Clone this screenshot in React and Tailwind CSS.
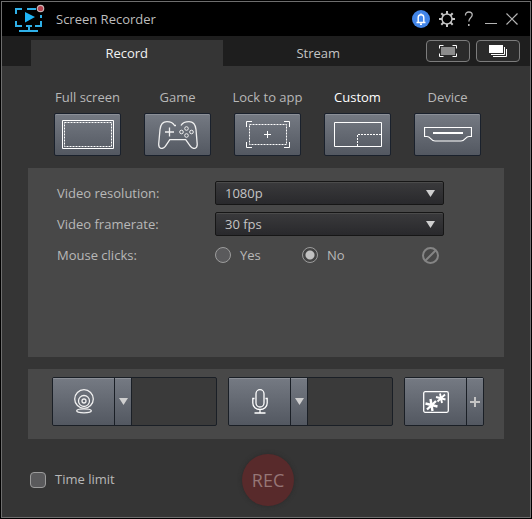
import { useState } from "react";

const steel =
  "bg-linear-to-b from-[#757a83] to-[#535861] inset-shadow-[0_1px_0_#8b8f97] hover:brightness-110";

const ScreenRecorderLogo = () => (
  <svg width="32" height="30" viewBox="0 1 32 30" fill="none" aria-hidden="true">
    <g stroke="#2fb0e8" strokeWidth="2">
      <path d="M2 11V6h6M13 6h9M2 18v5h6M27 12v3M27 18v5h-6" />
      <path d="M15 23v5M5 28h19" />
      <path d="M12 23h6" />
    </g>
    <path d="M11 9l10 5-10 5.500z" fill="#1fb4f5" />
    <circle cx="26.500" cy="5.500" r="3.200" fill="#b3404c" stroke="#c9b5b5" strokeWidth="1.200" />
  </svg>
);

const BellIcon = () => (
  <svg width="18" height="18" viewBox="0 0 18 18" fill="none" aria-hidden="true">
    <circle cx="9" cy="9" r="9" fill="#4285e8" />
    <path
      d="M4.500 12.500h9M6.200 12V7.500a2.800 2.800 0 0 1 5.600 0V12M8 14.200h2M9 3.500v1"
      stroke="#fff"
      strokeWidth="1.400"
    />
  </svg>
);

const GearIcon = () => (
  <svg width="16" height="16" viewBox="0 0 16 16" fill="none" stroke="#c4c4c4" aria-hidden="true">
    <circle cx="8" cy="8" r="5" strokeWidth="1.500" />
    <path
      d="M8 0v3M8 13v3M0 8h3M13 8h3M2.300 2.300l2.200 2.200M11.500 11.500l2.200 2.200M2.300 13.700l2.200-2.200M11.500 4.500l2.200-2.200"
      strokeWidth="2"
    />
  </svg>
);

const HelpIcon = () => (
  <svg width="10" height="16" viewBox="0 0 10 16" fill="none" stroke="#b4b4b4" aria-hidden="true">
    <path d="M1.500 4.500V4c0-2 1.400-3 3.300-3s3.400 1 3.400 3c0 2.700-3.400 3-3.400 6.500" strokeWidth="1.300" />
    <path d="M4.800 13v2" strokeWidth="1.600" />
  </svg>
);

const MinimizeIcon = () => (
  <svg width="12" height="12" viewBox="0 0 12 12" aria-hidden="true">
    <path d="M0 10.500h12" stroke="#b4b4b4" />
  </svg>
);

const CloseIcon = () => (
  <svg width="12" height="12" viewBox="0 0 12 12" aria-hidden="true">
    <path d="M.5.5l11 11M11.500.5l-11 11" stroke="#b4b4b4" strokeWidth="1.200" />
  </svg>
);

const RegionIcon = () => (
  <svg width="18" height="12" viewBox="0 0 18 12" fill="none" aria-hidden="true">
    <path d="M2 2h14v8H2z" fill="#8c8c8c" />
    <path d="M.5 3.500v-3h4M13.500.5h4v3M17.500 8.500v3h-4M4.500 11.500h-4v-3" stroke="#fff" />
  </svg>
);

const StackIcon = () => (
  <svg width="18" height="12" viewBox="0 0 18 12" fill="none" aria-hidden="true">
    <path d="M0 0h14v8H0z" fill="#fff" />
    <path d="M15.500 2v7.500H2M17.500 4v7.500H4" stroke="#fff" />
  </svg>
);

const FullScreenIcon = () => (
  <svg width="52" height="29" viewBox="0 0 52 29" fill="none" stroke="#fff" aria-hidden="true">
    <path d="M.5.5h51v28H.5z" />
    <path d="M2.500 2.500h47v24h-47z" strokeDasharray="2 1" />
  </svg>
);

const GameIcon = () => (
  <svg width="40" height="28" viewBox="0 0 40 28" fill="none" stroke="#f0f0f0" aria-hidden="true">
    <path d="M18 4.500h-1.500C15 2 12.500.7 9 .7 4.500.7 2.600 3.500 2 8.500L.7 23c-.3 5 4.200 5.600 6.600 2.300l4.500-6.600h15.900l4.800 6.600c2.500 3.300 7 2.700 6.700-2.300L38 8.500C37.400 3.500 35.500.7 31 .7c-3.500 0-6.500 1.300-8 3.800" strokeWidth="1.300" />
    <path d="M11.500 6.500v9M7 11h9" strokeWidth="1.300" />
    <circle cx="28.500" cy="7.500" r="1.800" />
    <circle cx="23.500" cy="11" r="1.800" />
    <circle cx="33.500" cy="11" r="1.800" />
    <circle cx="28.500" cy="14.500" r="1.800" />
  </svg>
);

const LockToAppIcon = () => (
  <svg width="44" height="27" viewBox="0 0 44 27" fill="none" stroke="#fff" aria-hidden="true">
    <path d="M.5 6V.5H6M38 .5h5.500V6M43.500 21v5.500H38M6 26.500H.5V21" />
    <path d="M3.500 3.500h37v20h-37z" strokeDasharray="2 1" />
    <path d="M21.500 10v7M18 13.500h7" />
  </svg>
);

const CustomIcon = () => (
  <svg width="48" height="25" viewBox="0 0 48 25" fill="none" stroke="#fff" aria-hidden="true">
    <path d="M.5.5h47v24H.5z" />
    <path d="M23.500 24V12.500H47" strokeDasharray="2 1" />
  </svg>
);

const DeviceIcon = () => (
  <svg width="48" height="15" viewBox="0 0 48 15" fill="none" stroke="#fff" aria-hidden="true">
    <path d="M.5.5h47v9h-2.500c-3.500 0-4 4.500-8 4.500H11c-4 0-4.500-4.500-8-4.500H.5z" strokeWidth="1.200" />
    <path d="M9 6h30" strokeWidth="2" />
  </svg>
);

const WebcamIcon = () => (
  <svg width="20" height="25" viewBox="0 0 20 25" fill="none" stroke="#f0f0f0" aria-hidden="true">
    <circle cx="10" cy="10" r="9.300" strokeWidth="1.300" />
    <circle cx="10" cy="12" r="5.500" strokeWidth="1.300" />
    <circle cx="10" cy="12" r="2" strokeWidth="1.300" />
    <ellipse cx="10" cy="21.800" rx="7.300" ry="2" fill="#6a6f78" strokeWidth="1.300" />
  </svg>
);

const MicIcon = () => (
  <svg width="16" height="25" viewBox="0 0 16 25" fill="none" stroke="#fff" aria-hidden="true">
    <rect x="4" y=".7" width="8" height="17.300" rx="4" strokeWidth="1.300" />
    <path d="M2.500 9.500H.8V14c0 4 3.200 6.500 7.200 6.500s7.200-2.500 7.200-6.500V9.500h-1.700M8 20.500V24M2.500 24h11" strokeWidth="1.300" />
  </svg>
);

const EffectsIcon = () => (
  <svg width="26" height="22" viewBox="0 0 26 22" fill="none" stroke="#fff" aria-hidden="true">
    <rect x=".7" y=".7" width="24.600" height="20.600" rx="1.500" strokeWidth="1.300" />
    <path d="M7.500 8l2 12M2.500 12.500l12 3M4 18.500l9-8.500" strokeWidth="2.400" />
    <path d="M17 2.500l2 9.500M13 6l9.500 2.500M14.500 10.500l7.500-7" strokeWidth="1.900" />
  </svg>
);

const BanIcon = () => (
  <svg width="17" height="17" viewBox="0 0 17 17" fill="none" stroke="#858585" strokeWidth="2" aria-hidden="true">
    <circle cx="8.500" cy="8.500" r="7.500" />
    <path d="M3.500 13.500l10-10" />
  </svg>
);

const ArrowDown = ({ className }) => (
  <svg width="9" height="7" viewBox="0 0 9 7" className={className} aria-hidden="true">
    <path d="M0 0h9L4.500 7z" fill="#cfcfcf" />
  </svg>
);

const modes = [
  { id: "full", label: "Full screen", Icon: FullScreenIcon },
  { id: "game", label: "Game", Icon: GameIcon },
  { id: "app", label: "Lock to app", Icon: LockToAppIcon },
  { id: "custom", label: "Custom", Icon: CustomIcon },
  { id: "device", label: "Device", Icon: DeviceIcon },
];

const TitleBar = () => (
  <header className="flex h-[34px] items-center bg-black pr-3 pl-3">
    <ScreenRecorderLogo />
    <h1 className="ml-2.5 flex-1 pt-0.5 text-[13px] text-[#bdbdbd]">Screen Recorder</h1>
    <div className="flex items-center gap-[9px]">
      <button type="button" aria-label="Notifications">
        <BellIcon />
      </button>
      <button type="button" aria-label="Preferences">
        <GearIcon />
      </button>
      <button type="button" aria-label="Help">
        <HelpIcon />
      </button>
      <button type="button" aria-label="Minimize" className="ml-0.5">
        <MinimizeIcon />
      </button>
      <button type="button" aria-label="Close">
        <CloseIcon />
      </button>
    </div>
  </header>
);

const TabBar = ({ tab, setTab }) => {
  const tabClass = (name) =>
    tab === name
      ? "h-[26px] flex-1 bg-[#353535] pt-0.5 text-[#f2f2f2]"
      : "h-[26px] flex-1 pt-0.5 text-[#c4c4c4]";

  return (
    <div className="flex h-[30px] items-end bg-[#1e1e1e] pr-2.5 pl-[29px]">
      <div role="tablist" className="flex flex-1 text-[13px]">
        <button
          type="button"
          role="tab"
          aria-selected={tab === "record"}
          className={tabClass("record")}
          onClick={() => setTab("record")}>
          Record
        </button>
        <button
          type="button"
          role="tab"
          aria-selected={tab === "stream"}
          className={tabClass("stream")}
          onClick={() => setTab("stream")}>
          Stream
        </button>
      </div>
      <div className="mb-1 ml-3 flex gap-1.5">
        <button
          type="button"
          aria-label="Show region"
          className="flex h-[22px] w-11 items-center justify-center rounded border border-[#7c7c7c] bg-[#2b2b2b]">
          <RegionIcon />
        </button>
        <button
          type="button"
          aria-label="Recordings"
          className="flex h-[22px] w-11 items-center justify-center rounded border border-[#7c7c7c] bg-[#2b2b2b]">
          <StackIcon />
        </button>
      </div>
    </div>
  );
};

const SelectBox = ({ id, value, onChange, options }) => (
  <div className="relative">
    <select
      id={id}
      value={value}
      onChange={(e) => onChange(e.target.value)}
      className="block h-6 w-full appearance-none rounded-xs border border-[#161616] bg-linear-to-b from-[#3a3a3c] to-[#29292c] pt-0.5 pl-[9px] text-[13px] text-[#c4c4c4] inset-shadow-[0_1px_0_#4b4b4b]">
      {options.map((option) => (
        <option key={option}>{option}</option>
      ))}
    </select>
    <ArrowDown className="pointer-events-none absolute top-[9px] right-[9px]" />
  </div>
);

const Radio = ({ label, checked, onChange }) => (
  <label className="flex w-[87px] items-center gap-[9px]">
    <input
      type="radio"
      name="clicks"
      checked={checked}
      onChange={onChange}
      className="size-4 appearance-none rounded-full border border-[#9c9c9c] bg-[#5a5a5c] checked:bg-[radial-gradient(circle,#c2c2c2_4px,#444444_5px)]"
    />
    <span className="pt-0.5">{label}</span>
  </label>
);

const SourceControl = ({ label, Icon }) => (
  <div className="flex h-[49px] w-[165px] overflow-hidden rounded-xs border border-[#1a1f26] bg-[#3a3a3a]">
    <button
      type="button"
      aria-label={label}
      className={`flex w-[62px] items-center justify-center border-r border-[#1a1f26] ${steel}`}>
      <Icon />
    </button>
    <button
      type="button"
      aria-label={`${label} options`}
      className={`flex w-[17px] items-center justify-center border-r border-[#1a1f26] ${steel}`}>
      <ArrowDown />
    </button>
  </div>
);

const App = () => {
  const [tab, setTab] = useState("record");
  const [mode, setMode] = useState("custom");
  const [resolution, setResolution] = useState("1080p");
  const [framerate, setFramerate] = useState("30 fps");
  const [clicks, setClicks] = useState(false);
  const [timeLimit, setTimeLimit] = useState(false);

  return (
    <div className="flex min-h-screen bg-black p-px font-['Open_Sans','Noto_Sans',sans-serif]">
      <div className="flex flex-1 flex-col border border-[#6e6e6e] bg-[#353535] text-[#b8b8b8]">
        <TitleBar />
        <TabBar tab={tab} setTab={setTab} />

        <main className="flex flex-1 flex-col">
          {/* Capture modes */}
          <div className="mt-[22px] flex justify-between pr-[49px] pl-[52px]">
            {modes.map(({ id, label, Icon }) => (
              <button
                key={id}
                type="button"
                aria-pressed={mode === id}
                onClick={() => setMode(id)}
                className="flex w-[67px] flex-col items-center gap-[7px]">
                <span
                  className={
                    mode === id
                      ? "text-[13px] leading-[18px] whitespace-nowrap text-white"
                      : "text-[13px] leading-[18px] whitespace-nowrap"
                  }>
                  {label}
                </span>
                <span
                  className={`flex h-[43px] w-full items-center justify-center rounded-xs border border-[#1a212c] ${steel}`}>
                  <Icon />
                </span>
              </button>
            ))}
          </div>

          {/* Video settings */}
          <section className="mx-[26px] mt-3 grid min-h-[189px] grid-cols-[158px_229px] content-start items-center gap-y-[7px] bg-[#484848] pt-[13px] pl-[29px] text-[13px]">
            <label htmlFor="resolution" className="pt-0.5">
              Video resolution:
            </label>
            <SelectBox
              id="resolution"
              value={resolution}
              onChange={setResolution}
              options={["2160p", "1440p", "1080p", "720p"]}
            />
            <label htmlFor="framerate" className="pt-0.5">
              Video framerate:
            </label>
            <SelectBox
              id="framerate"
              value={framerate}
              onChange={setFramerate}
              options={["60 fps", "30 fps", "25 fps"]}
            />
            <span id="clicks-label" className="pt-0.5">
              Mouse clicks:
            </span>
            <div
              role="radiogroup"
              aria-labelledby="clicks-label"
              className="flex h-6 items-center">
              <Radio label="Yes" checked={clicks} onChange={() => setClicks(true)} />
              <Radio label="No" checked={!clicks} onChange={() => setClicks(false)} />
              <button type="button" aria-label="Click effects" className="mr-[5px] ml-auto">
                <BanIcon />
              </button>
            </div>
          </section>

          {/* Webcam, microphone and effects */}
          <section className="mx-[26px] mt-3 flex gap-[11px] bg-[#484848] pt-2 pb-[13px] pl-6">
            <SourceControl label="Webcam" Icon={WebcamIcon} />
            <SourceControl label="Microphone" Icon={MicIcon} />
            <div className="flex h-[49px] w-20 overflow-hidden rounded-xs border border-[#1a1f26]">
              <button
                type="button"
                aria-label="Effects"
                className={`flex w-[62px] items-center justify-center border-r border-[#1a1f26] ${steel}`}>
                <EffectsIcon />
              </button>
              <button
                type="button"
                aria-label="Add effect"
                className={`flex flex-1 items-center justify-center ${steel}`}>
                <svg width="10" height="10" viewBox="0 0 10 10" aria-hidden="true">
                  <path d="M5 0v10M0 5h10" stroke="#c4c4c4" strokeWidth="2" />
                </svg>
              </button>
            </div>
          </section>

          <footer className="mt-[15px] grid grid-cols-[1fr_auto_1fr] items-center pr-6 pl-7">
            <label className="flex items-center gap-[9px] text-[13px]">
              <input
                type="checkbox"
                checked={timeLimit}
                onChange={(e) => setTimeLimit(e.target.checked)}
                className="size-4 appearance-none rounded border border-[#9c9c9c] bg-[#5a5a5c] checked:bg-[#c2c2c2]"
              />
              Time limit
            </label>
            <button
              type="button"
              className="size-[52px] rounded-full bg-[#582a2b] text-lg text-[#967676] shadow-[0_0_4px_#2a2a2a]">
              REC
            </button>
          </footer>
        </main>
      </div>
    </div>
  );
};

export default App;
